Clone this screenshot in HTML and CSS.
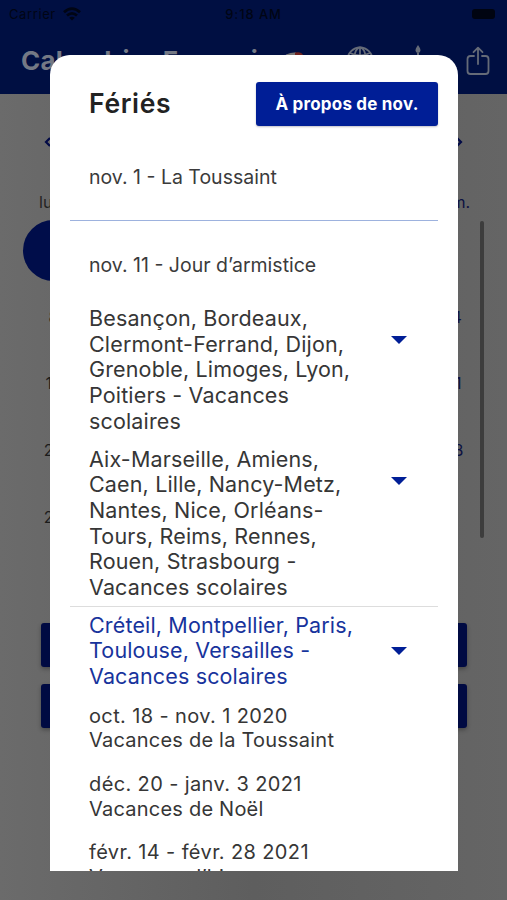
FILE: index.html
```html
<!DOCTYPE html>
<html lang="fr">
<head>
<meta charset="utf-8">
<meta name="viewport" content="width=device-width, initial-scale=1">
<title>Calendrier Français</title>
<link rel="stylesheet" href="styles.css">
</head>
<body>
<div class="screen">
  <header class="topbar">
    <div class="status">
      <div class="carrier"><span>Carrier</span>
        <svg width="18" height="14" viewBox="0 0 18 14" fill="none" stroke="#000514" stroke-width="2.7"><path d="M1 5.3Q9-2.2 17 5.3M4 8.6Q9 4.1 14 8.6"/><path d="M9 13.5 6.2 10.8Q9 8.6 11.8 10.8Z" fill="#000514" stroke="none"/></svg>
      </div>
      <span class="clock">9:18 AM</span>
      <span class="battery"></span>
    </div>
    <div class="titlebar">
      <h1 class="app-title">Calendrier Français</h1>
      <svg class="flag" width="24" height="20" viewBox="0 0 24 20"><path d="M0 4Q3 2 6 2V17Q4 16 0 18Z" fill="#101c60"/><path d="M4 2.4Q10 0 14 .6V16Q12 16 4 17Z" fill="#777"/><path d="M13 .6Q19-1 21 3V17Q18 15 13 16Z" fill="#70231f"/></svg>
      <svg class="globe" width="28" height="28" viewBox="0 0 28 28" fill="none" stroke="#656b78" stroke-width="1.8"><circle cx="14" cy="14" r="12.5"/><ellipse cx="14" cy="14" rx="6" ry="12.5"/><path d="M14 1.5v25M1.5 14h25M4 7q10 5 20 0M4 21q10-5 20 0"/></svg>
      <svg class="candle" width="10" height="30" viewBox="0 0 10 30" fill="#656b78"><path d="M5 0Q8 4 7.4 6Q6.8 8 5 8T2.6 6Q2 4 5 0ZM4 8h2v3h2v18H2V11h2Z"/></svg>
      <svg class="share" width="24" height="30" viewBox="0 0 24 30" fill="none" stroke="#656b78" stroke-width="1.8" stroke-linecap="round" stroke-linejoin="round"><path d="M8 10H4.5Q1.5 10 1.5 13V25Q1.5 28 4.5 28H19.5Q22.5 28 22.5 25V13Q22.5 10 19.5 10H16M12 18V2M7.5 6.2 12 1.7 16.5 6.2"/></svg>
    </div>
  </header>
  <main class="calendar">
    <div class="month-nav">
      <svg width="8" height="10" viewBox="0 0 8 10" fill="none" stroke="#020a46" stroke-width="2.2"><path d="M6 1 2 5 6 9"/></svg>
      <svg width="8" height="10" viewBox="0 0 8 10" fill="none" stroke="#020a46" stroke-width="2.2"><path d="M2 1 6 5 2 9"/></svg>
    </div>
    <div class="weekdays"><span>lun.</span><span class="sunday">dim.</span></div>
    <div class="grid-area">
      <div class="days">
        <div class="week"><span class="selected"></span></div>
        <div class="week"><span>8</span><span class="sunday">14</span></div>
        <div class="week"><span>15</span><span class="sunday">21</span></div>
        <div class="week"><span>22</span><span class="sunday">28</span></div>
        <div class="week"><span>29</span></div>
      </div>
      <div class="scrollbar"></div>
    </div>
    <div class="actions"><div class="action"></div><div class="action"></div></div>
  </main>

  <section class="modal">
    <div class="modal-head">
      <h2>Fériés</h2>
      <button class="about" type="button">À propos de nov.</button>
    </div>
    <p class="holiday first">nov. 1 - La Toussaint</p>
    <p class="holiday">nov. 11 - Jour d’armistice</p>
    <div class="zone">
      <p>Besançon, Bordeaux,<br>Clermont-Ferrand, Dijon,<br>Grenoble, Limoges, Lyon,<br>Poitiers - Vacances<br>scolaires</p>
      <svg class="caret" width="16" height="8" viewBox="0 0 16 8"><path d="M0 0H16L8 8Z" fill="#001e96"/></svg>
    </div>
    <div class="zone">
      <p>Aix-Marseille, Amiens,<br>Caen, Lille, Nancy-Metz,<br>Nantes, Nice, Orléans-<br>Tours, Reims, Rennes,<br>Rouen, Strasbourg -<br>Vacances scolaires</p>
      <svg class="caret" width="16" height="8" viewBox="0 0 16 8"><path d="M0 0H16L8 8Z" fill="#001e96"/></svg>
    </div>
    <div class="zone open">
      <p>Créteil, Montpellier, Paris,<br>Toulouse, Versailles -<br>Vacances scolaires</p>
      <svg class="caret" width="16" height="8" viewBox="0 0 16 8"><path d="M0 0H16L8 8Z" fill="#001e96"/></svg>
    </div>
    <div class="periods">
      <p>oct. 18 - nov. 1 2020<br>Vacances de la Toussaint</p>
      <p>déc. 20 - janv. 3 2021<br>Vacances de Noël</p>
      <p>févr. 14 - févr. 28 2021<br>Vacances d’hiver</p>
    </div>
  </section>
</div>
</body>
</html>
```
FILE: styles.css
```css
* { box-sizing: border-box; margin: 0; padding: 0; }
body { font-family: Inter, "Liberation Sans", sans-serif; color: #333; }
.screen { position: relative; width: 507px; height: 900px; overflow: hidden; background: linear-gradient(90deg, #6b6b6b, #5e5e5e 50%, #656565); }

.topbar { height: 94px; background: #000f42; }
.status { display: grid; grid-template-columns: 1fr auto 1fr; align-items: center; height: 27px; padding: 0 12px 0 9px; color: #000514; font-size: 13px; }
.carrier { display: flex; align-items: center; gap: 7px; letter-spacing: .6px; }
.clock { padding-left: 3px; font-weight: 500; letter-spacing: .9px; }
.battery { justify-self: end; width: 23px; height: 10px; border-radius: 3px; background: #000411; }
.titlebar { display: flex; align-items: flex-start; height: 67px; padding: 18px 17px 0 21px; }
.app-title { width: 261px; font-size: 26px; line-height: 32px; font-weight: 700; letter-spacing: .2px; color: #747985; white-space: nowrap; }
.flag { margin: 7px 0 0 0; }
.globe { margin: 1px 0 0 40px; }
.candle { margin-left: 39px; }
.share { margin: 1px 0 0 auto; }

.month-nav { display: flex; justify-content: space-between; height: 62px; padding: 43px 44px 0; }
.weekdays { display: flex; justify-content: space-between; height: 65px; padding: 36px 37px 0 39px; font-size: 16px; line-height: 20px; color: #232323; }
.sunday { color: #0c1141; }
.grid-area { display: flex; height: 334px; }
.days { width: 480px; margin-top: -1px; }
.week { display: flex; justify-content: space-between; align-items: center; height: 66.7px; padding-left: 23px; font-size: 16px; color: #1c1c1c; }
.week:first-child { height: 61px; }
.week:nth-child(2) { height: 69px; padding-top: 2px; }
.week span { width: 61px; text-align: center; }
.week .sunday { width: 53px; }
.week .selected { height: 61px; border-radius: 50%; background: #000d4a; }
.scrollbar { width: 4px; height: 317px; border-radius: 2px; background: #3d3d3d; }
.actions { display: grid; gap: 17px; padding: 68px 40px 0 41px; }
.action { height: 44px; border-radius: 3px; background: #000a42; box-shadow: 0 2px 4px rgba(0, 0, 0, .3); }

.modal { position: absolute; left: 50px; top: 55px; width: 408px; height: 816px; padding: 27px 20px 0; overflow: hidden; border-radius: 20px 20px 0 0; background: #fff; }
.modal-head { display: flex; justify-content: space-between; align-items: flex-start; height: 43px; padding-left: 19px; }
.modal-head h2 { font-size: 26.5px; line-height: 43px; font-weight: 600; letter-spacing: .65px; color: #222; }
.about { width: 182px; height: 44px; border: 0; border-radius: 3px; background: #001e96; box-shadow: 0 1px 2px rgba(0, 0, 40, .25); color: #fff; font: 700 17px Inter, sans-serif; letter-spacing: .2px; }
.holiday { height: 78px; padding: 32px 0 0 19px; font-size: 19.5px; line-height: 24px; color: #3b3b3b; }
.holiday.first { height: 96px; padding-top: 40px; border-bottom: 1px solid #9db2de; }
.zone { display: flex; justify-content: space-between; padding: 7px 31px 5px 19px; font-size: 21.5px; line-height: 25.7px; letter-spacing: .15px; color: #363636; }
.caret { flex: none; margin-top: 30px; }
.open { padding: 6px 31px 6px 19px; border-top: 1px solid #ddd; color: #17339c; }
.open .caret { margin-top: 34px; }
.periods { display: grid; gap: 19.3px; padding: 8px 0 0 19px; font-size: 20px; line-height: 24.5px; letter-spacing: .22px; color: #363636; }
.periods p::first-line { letter-spacing: .38px; }
```
